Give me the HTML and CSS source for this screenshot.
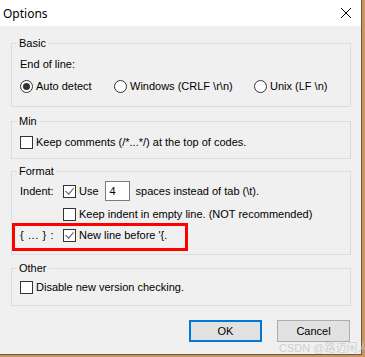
FILE: index.html
```html
<!DOCTYPE html>
<html lang="en">
<head>
    <meta charset="UTF-8">
    <title>Options</title>
    <link rel="stylesheet" href="styles.css">
</head>
<body>
    <div class="window">
        <div class="titlebar">
            <span class="title">Options</span>
            <svg class="close" width="12" height="12" viewBox="0 0 12 12">
                <path d="M1 1 L11 11 M11 1 L1 11" stroke="#000" stroke-width="1" fill="none"/>
            </svg>
        </div>

        <div class="content">
            <fieldset class="group basic">
                <legend>Basic</legend>
                <div class="row"><span>End of line:</span></div>
                <div class="row">
                    <span class="radio-item w1"><span class="radio checked"></span><span>Auto detect</span></span>
                    <span class="radio-item w2"><span class="radio"></span><span>Windows (CRLF \r\n)</span></span>
                    <span class="radio-item"><span class="radio"></span><span>Unix (LF \n)</span></span>
                </div>
            </fieldset>

            <fieldset class="group min">
                <legend>Min</legend>
                <div class="row"><span class="check"></span><span>Keep comments (/*...*/) at the top of codes.</span></div>
            </fieldset>

            <fieldset class="group format">
                <legend>Format</legend>
                <div class="row tall">
                    <span class="caption">Indent:</span>
                    <span class="check checked"></span><span>Use</span>
                    <span class="num">4</span>
                    <span>spaces instead of tab (\t).</span>
                </div>
                <div class="row">
                    <span class="caption"></span>
                    <span class="check"></span><span>Keep indent in empty line. (NOT recommended)</span>
                </div>
                <div class="row">
                    <span class="caption brace">{ ... } :</span>
                    <span class="check checked"></span><span>New line before '{.</span>
                </div>
                <div class="mark"></div>
            </fieldset>

            <fieldset class="group other">
                <legend>Other</legend>
                <div class="row"><span class="check"></span><span>Disable new version checking.</span></div>
            </fieldset>

            <div class="buttons">
                <button class="btn default">OK</button>
                <button class="btn">Cancel</button>
            </div>
        </div>
    </div>
    <div class="watermark">CSDN @路迈闲人2</div>
</body>
</html>
```

FILE: styles.css
```css
html, body {
    margin: 0;
    padding: 0;
}
body {
    width: 365px;
    height: 357px;
    background-color: #c9965f;
    font-family: "Liberation Sans", Arial, sans-serif;
    font-size: 11px;
    color: #000;
    position: relative;
    overflow: hidden;
}
.window {
    width: 361px;
    height: 354px;
    background-color: #f0f0f0;
    border-right: 1px solid #6e5842;
    border-bottom: 1px solid #6e5842;
}
.titlebar {
    height: 26px;
    background-color: #fff;
    display: flex;
    align-items: center;
    justify-content: space-between;
    padding: 0 9px 0 3px;
}
.title {
    font-family: "Noto Sans", sans-serif;
    font-size: 12px;
}
.content {
    padding-top: 10px;
}
.group {
    margin: 0 10px 0 11px;
    padding: 0 8px;
    border: 1px solid #dcdcdc;
    position: relative;
}
.group legend {
    padding: 0 2px;
    margin-left: -3px;
    line-height: 14px;
}
.row {
    display: flex;
    align-items: center;
    height: 16px;
    white-space: nowrap;
}
.row.tall {
    height: 20px;
}
.basic {
    padding-top: 6px;
    padding-bottom: 12px;
}
.basic .row + .row {
    margin-top: 6px;
}
.min {
    margin-top: 7px;
    padding-top: 6px;
    padding-bottom: 8px;
}
.format {
    margin-top: 5px;
    padding-top: 3px;
    padding-bottom: 11px;
}
.format .row + .row {
    margin-top: 5px;
}
.other {
    margin-top: 6px;
    padding-top: 4px;
    padding-bottom: 10px;
}
.radio-item {
    display: flex;
    align-items: center;
}
.w1 {
    width: 94px;
}
.w2 {
    width: 140px;
}
.radio {
    width: 11px;
    height: 11px;
    border: 1px solid #333;
    border-radius: 50%;
    background: #fff;
    margin-right: 3px;
    position: relative;
}
.radio.checked::after {
    content: "";
    position: absolute;
    left: 2px;
    top: 2px;
    width: 7px;
    height: 7px;
    border-radius: 50%;
    background: #333;
}
.check {
    width: 11px;
    height: 11px;
    border: 1px solid #333;
    background: #fff;
    margin-right: 3px;
    position: relative;
}
.check.checked::after {
    content: "";
    position: absolute;
    left: 3px;
    top: 0px;
    width: 4px;
    height: 7px;
    border-right: 1px solid #555;
    border-bottom: 1px solid #555;
    transform: rotate(40deg);
}
.caption {
    width: 43px;
}
.brace {
    letter-spacing: 0.6px;
}
.num {
    width: 19px;
    height: 18px;
    border: 1px solid #7a7a7a;
    background: #fff;
    margin-left: 6px;
    margin-right: 6px;
    padding-left: 4px;
    line-height: 18px;
}
.mark {
    position: absolute;
    left: 0;
    top: 45px;
    width: 170px;
    height: 22px;
    border: 3px solid #f00;
}
.buttons {
    display: flex;
    justify-content: flex-end;
    gap: 15px;
    padding: 14px 11px 0 0;
}
.btn {
    width: 73px;
    height: 22px;
    background: #e1e1e1;
    border: 1px solid #adadad;
    font-family: "Liberation Sans", Arial, sans-serif;
    font-size: 11px;
    color: #000;
    padding: 0;
}
.btn.default {
    border: 2px solid #0078d7;
}
.watermark {
    position: absolute;
    left: 279px;
    top: 339px;
    font-family: "Liberation Sans", "Noto Sans CJK SC", sans-serif;
    font-size: 11px;
    color: rgba(200, 200, 200, 0.85);
    white-space: nowrap;
}
```
